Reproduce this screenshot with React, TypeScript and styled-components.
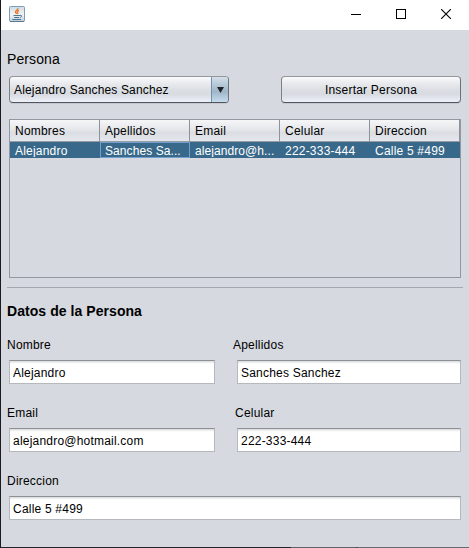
import React from 'react';
import styled, { createGlobalStyle } from 'styled-components';

const GlobalStyle = createGlobalStyle`
  *, *::before, *::after { box-sizing: border-box; }
  body { margin: 0; background: #d6d9df; }
`;

const Window = styled.div`
  width: 469px;
  height: 548px;
  display: flex;
  flex-direction: column;
  overflow: hidden;
  border-left: 1px solid #1c1a1f;
  background: #d6d9df;
  color: #000;
  font-family: "Liberation Sans", Arial, sans-serif;
  font-size: 12px;
  letter-spacing: 0.21px;
  white-space: nowrap;
`;

const TitleBar = styled.header`
  height: 30px;
  flex: none;
  display: flex;
  justify-content: space-between;
  background: #fff;
`;

const AppIcon = styled.svg`
  width: 16px;
  height: 16px;
  margin: 6px 0 0 8px;
`;

const WindowControls = styled.div`
  display: flex;
  padding-right: 1px;
`;

const ControlButton = styled.button`
  width: 45px;
  height: 28px;
  padding: 0;
  border: 0;
  background: none;
  display: flex;
  align-items: center;
  justify-content: center;
`;

const Content = styled.main`
  flex: 1;
  padding: 20px 8px 0 6px;
`;

const SectionTitle = styled.h1`
  margin: 0;
  height: 18px;
  line-height: 18px;
  font-size: 14px;
  font-weight: 400;
  letter-spacing: 0.1px;
`;

const FormTitle = styled.h2`
  margin: 14px 0 0;
  height: 18px;
  line-height: 18px;
  font-size: 14px;
  font-weight: 700;
  letter-spacing: 0.06px;
`;

const Toolbar = styled.div`
  display: flex;
  justify-content: space-between;
  margin: 8px 0 0 2px;
`;

const raised = `
  height: 27px;
  border: 1px solid;
  border-color: #94979d #6d7179 #50555e #7c8089;
  border-radius: 4px;
  background: linear-gradient(#fafafb 0%, #e8e9ed 28%, #dadde2 55%, #d8dbe1 70%, #edf0f7 100%);
  box-shadow: 0 1px 0 #c5c8cf;
`;

const ComboBox = styled.div`
  ${raised}
  width: 220px;
  display: flex;
  justify-content: space-between;
  padding-left: 4px;
  line-height: 26px;
  letter-spacing: 0.16px;
  overflow: hidden;
`;

const ComboArrow = styled.span`
  width: 17px;
  display: flex;
  align-items: center;
  justify-content: center;
  border-left: 1px solid #7292ad;
  background: linear-gradient(#d3dee8 0%, #a9bfd0 45%, #9fb6c9 58%, #c5dcef 100%);
`;

const ActionButton = styled.button`
  ${raised}
  width: 180px;
  padding: 0;
  color: #000;
  font: inherit;
  letter-spacing: 0.22px;
`;

const TablePane = styled.div`
  width: 452px;
  height: 159px;
  margin: 16px 0 0 2px;
  border: 1px solid #9297a1;
`;

const TableRow = styled.div`
  display: grid;
  grid-template-columns: repeat(5, 90px);
`;

const HeaderRow = styled(TableRow)`
  height: 22px;
  border-bottom: 1px solid #989ba4;
  background: linear-gradient(#f6f6f8 0%, #e5e7eb 45%, #dadde2 60%, #e5e7ee 100%);
`;

const HeaderCell = styled.div`
  padding-left: 5px;
  line-height: 22px;
  border-right: 1px solid #8f929a;
`;

const DataRow = styled(TableRow)`
  height: 16px;
  background: #39698a;
  color: #fff;
`;

const DataCell = styled.div<{ $focused?: boolean; $tight?: boolean }>`
  height: 16px;
  padding: 0 4px;
  line-height: 16px;
  letter-spacing: ${(p) => (p.$tight ? '0.08px' : '0.21px')};
  border: 1px solid ${(p) => (p.$focused ? '#739fce' : 'transparent')};
  overflow: hidden;
`;

const Separator = styled.hr`
  width: 456px;
  height: 1px;
  margin: 9px 0 0;
  border: 0;
  background: #a3a7b0;
`;

const Form = styled.form`
  display: grid;
  grid-template-columns: 206px 224px;
  column-gap: 22px;
  row-gap: 21px;
  margin: 17px 0 0 2px;
`;

const Field = styled.label<{ $wide?: boolean }>`
  display: block;
  ${(p) => (p.$wide ? 'grid-column: 1 / -1;' : '')}
`;

const FieldLabel = styled.span<{ $outdent?: number }>`
  display: block;
  height: 16px;
  line-height: 16px;
  margin: 0 0 7px -${(p) => p.$outdent ?? 2}px;
`;

const TextInput = styled.input`
  display: block;
  width: 100%;
  height: 24px;
  padding: 2px 3px 0;
  border: 1px solid #b5b8bc;
  border-top-color: #8d9095;
  border-radius: 0;
  outline: 0;
  background: linear-gradient(#d5d7d9 0, #f6f6f6 2px, #fff 3px);
  color: #000;
  font: inherit;
  letter-spacing: inherit;
`;

const BottomEdge = styled.footer`
  height: 1px;
  flex: none;
  background: linear-gradient(90deg, #252329 0 290px, #626167 290px 355px, #4b4b50 355px 357px, #69696e 357px);
`;

const fields = [
  { label: 'Nombre', value: 'Alejandro' },
  { label: 'Apellidos', value: 'Sanches Sanchez', outdent: 4 },
  { label: 'Email', value: 'alejandro@hotmail.com' },
  { label: 'Celular', value: '222-333-444' },
  { label: 'Direccion', value: 'Calle 5 #499', wide: true },
];

const columns = ['Nombres', 'Apellidos', 'Email', 'Celular', 'Direccion'];
const cells = ['Alejandro', 'Sanches Sa...', 'alejandro@h...', '222-333-444', 'Calle 5 #499'];

function JavaIcon() {
  return (
    <AppIcon viewBox="0 0 16 16" fill="none">
      <defs>
        <linearGradient id="tile" x1="0" y1="0" x2="0" y2="1">
          <stop stopColor="#cddae5" />
          <stop offset=".55" stopColor="#f3f5f6" />
          <stop offset="1" stopColor="#bccad5" />
        </linearGradient>
      </defs>
      <rect x=".5" y=".5" width="15" height="15" rx="1" fill="url(#tile)" stroke="#7f9db3" />
      <path d="M1 15.500h14" stroke="#587992" />
      <path d="M9 2.200c.3 1.800-3 2.300-2.500 4 .2.700 1 1 1.100 1.800M10 4.300c-1.900.9-1.900 1.500-1.300 2.200.4.600.2 1.100-.2 1.500" stroke="#e87522" strokeWidth="1.300" />
      <path d="M4.500 9.500h6.500M5.200 11.500h4.800M3.500 13.500h8.500" stroke="#4d7593" strokeWidth="1.200" />
      <path d="M11 9.300c2.500-.5 2.200 1.700-.2 2.300" stroke="#4d7593" />
    </AppIcon>
  );
}

export default function App() {
  return (
    <>
      <GlobalStyle />
      <Window>
        <TitleBar>
          <JavaIcon />
          <WindowControls>
            <ControlButton aria-label="Minimizar">
              <svg width="10" height="10" shapeRendering="crispEdges"><path d="M0 5.500h10" stroke="#000" /></svg>
            </ControlButton>
            <ControlButton aria-label="Maximizar">
              <svg width="10" height="10"><rect x=".5" y=".5" width="9" height="9" fill="none" stroke="#000" /></svg>
            </ControlButton>
            <ControlButton aria-label="Cerrar">
              <svg width="10" height="10"><path d="M0 0l10 10M10 0L0 10" stroke="#000" strokeWidth="1.100" /></svg>
            </ControlButton>
          </WindowControls>
        </TitleBar>
        <Content>
          <SectionTitle>Persona</SectionTitle>
          <Toolbar>
            <ComboBox>
              Alejandro Sanches Sanchez
              <ComboArrow>
                <svg width="7" height="6"><path d="M0 0h7L3.500 6z" fill="#202428" /></svg>
              </ComboArrow>
            </ComboBox>
            <ActionButton>Insertar Persona</ActionButton>
          </Toolbar>
          <TablePane>
            <HeaderRow>
              {columns.map((name) => <HeaderCell key={name}>{name}</HeaderCell>)}
            </HeaderRow>
            <DataRow>
              {cells.map((text, i) => (
                <DataCell key={text} $focused={i === 1} $tight={text.endsWith('...')}>{text}</DataCell>
              ))}
            </DataRow>
          </TablePane>
          <Separator />
          <FormTitle>Datos de la Persona</FormTitle>
          <Form>
            {fields.map((f) => (
              <Field key={f.label} $wide={f.wide}>
                <FieldLabel $outdent={f.outdent}>{f.label}</FieldLabel>
                <TextInput defaultValue={f.value} />
              </Field>
            ))}
          </Form>
        </Content>
        <BottomEdge />
      </Window>
    </>
  );
}
